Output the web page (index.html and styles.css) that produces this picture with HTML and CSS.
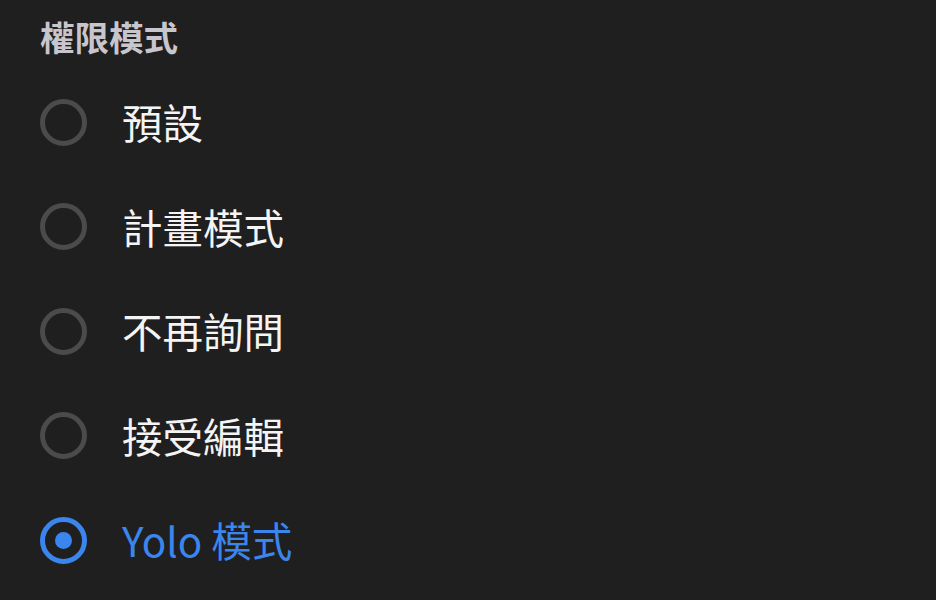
FILE: index.html
```html
<!DOCTYPE html>
<html lang="zh-Hant">
<head>
<meta charset="utf-8">
<link rel="stylesheet" href="styles.css">
</head>
<body>
<div class="panel">
  <div class="title">權限模式</div>
  <ul class="options">
    <li class="option"><span class="radio"></span><span class="label">預設</span></li>
    <li class="option"><span class="radio"></span><span class="label">計畫模式</span></li>
    <li class="option"><span class="radio"></span><span class="label">不再詢問</span></li>
    <li class="option"><span class="radio"></span><span class="label">接受編輯</span></li>
    <li class="option selected"><span class="radio"></span><span class="label">Yolo 模式</span></li>
  </ul>
</div>
</body>
</html>
```
FILE: styles.css
```css
html, body {
  margin: 0;
  padding: 0;
  background: #1f1f1f;
}
body {
  width: 936px;
  height: 600px;
  overflow: hidden;
  font-family: "Noto Sans CJK TC", "Noto Sans", sans-serif;
}
.panel {
  padding: 13px 0 0 40px;
}
.title {
  font-size: 34.5px;
  font-weight: 700;
  color: #c8c6cc;
  line-height: 46px;
}
.options {
  list-style: none;
  margin: 0;
  padding: 0;
  margin-top: 11px;
}
.option {
  display: flex;
  align-items: center;
  height: 104.5px;
  gap: 35px;
}
.radio {
  box-sizing: border-box;
  width: 47px;
  height: 47px;
  border: 5px solid #4b4b4b;
  border-radius: 50%;
  flex: none;
  display: flex;
  align-items: center;
  justify-content: center;
}
.label {
  font-size: 40.5px;
  color: #f4f4f4;
  line-height: 1;
}
.selected .radio {
  border-color: #3b86ee;
}
.selected .radio::after {
  content: "";
  width: 17px;
  height: 17px;
  border-radius: 50%;
  background: #3b86ee;
}
.selected .label {
  color: #3b86ee;
}
```
